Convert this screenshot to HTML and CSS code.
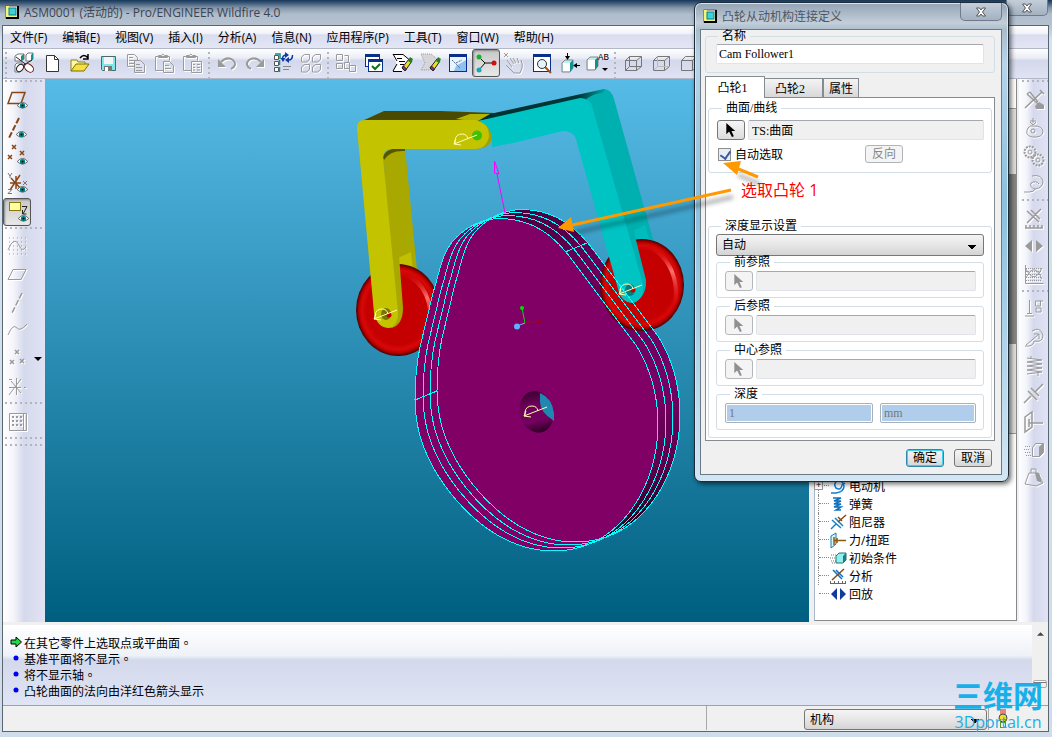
FILE: index.html
```
<!DOCTYPE html>
<html lang="zh-CN">
<head>
    <meta charset="UTF-8">
    <meta name="viewport" content="width=device-width, initial-scale=1.0">
    <title>ASM0001 (活动的) - Pro/ENGINEER Wildfire 4.0</title>
    <link rel="stylesheet" href="styles.css">
</head>
<body>
    <!-- Shared icon parts -->
    <svg class="defs" width="0" height="0">
        <symbol id="i-eye" viewBox="0 0 12 8">
            <path d="M0 4 Q6 -3 12 4 Q6 10 0 4z" fill="#fff" stroke="#555" stroke-width="1"/>
            <circle cx="6" cy="4" r="3" fill="#007c7c"/><circle cx="6" cy="4" r="1" fill="#000"/>
        </symbol>
        <symbol id="i-pointer" viewBox="0 0 12 16">
            <path d="M1 0 V12 L4 9 L7 15 L9 14 L6.500 8.500 H10.500z" fill="currentColor"/>
        </symbol>
        <symbol id="i-part" viewBox="0 0 14 14">
            <rect x="1" y="1" width="12" height="12" fill="#fff" stroke="#555"/>
            <path d="M1 1 h3 v9 h-1 l-2 3z" fill="#f4f480"/><path d="M1 13 l3-3 h7 l2 3z" fill="#f4f480"/>
            <rect x="4" y="3" width="7" height="7" fill="#3fd0d8" stroke="#078080"/>
            <path d="M13 1 V13 H1" fill="none" stroke="#000" stroke-width="2"/>
        </symbol>
        <symbol id="i-box" viewBox="0 0 24 24">
            <path d="M4.500 9.500 h11 v10 H4.500z M8.500 5.500 h12 v10 l-5 4 M4.500 9.500 l4-4 M15.500 9.500 l5-4" fill="none" stroke="#777"/>
        </symbol>
        <symbol id="i-x" viewBox="0 0 12 12">
            <path d="M1.500 2 h3 l1.500 2 l1.500-2 h3 l-3 4 l3 4 h-3 l-1.500-2 l-1.500 2 h-3 l3-4z" fill="#fff" stroke="#555"/>
        </symbol>
        <symbol id="i-pencil" viewBox="0 0 24 24">
            <path d="M12 17 L19 8 l3 2 l-7 10z" fill="#e8e020" stroke="#222"/>
            <path d="M12 17 l3 3 l1.500-2 l-3-3z" fill="#a020a0" stroke="#222"/>
            <path d="M18 10 l3 2 l2-4 l-3-2z" fill="#208030"/>
        </symbol>
        <symbol id="i-axis" viewBox="0 0 30 16">
            <path d="M5 13 V9 Q6 3 12 3 Q17 3 18 8 M27 4 L4 13 M4 13 L6 8 M4 13 L11 14" fill="none" stroke="#ffffb0"/>
        </symbol>
    </svg>

    <div class="app">
        <!-- Title bar -->
        <header class="titlebar">
            <svg class="title-icon"><use href="#i-part"/></svg>
            <h1>ASM0001 (活动的) - Pro/ENGINEER Wildfire 4.0</h1>
            <button class="win-close" aria-label="关闭"><svg><use href="#i-x"/></svg></button>
        </header>

        <div class="client">
            <nav class="menubar">
                <a href="#">文件(F)</a>
                <a href="#">编辑(E)</a>
                <a href="#">视图(V)</a>
                <a href="#">插入(I)</a>
                <a href="#">分析(A)</a>
                <a href="#">信息(N)</a>
                <a href="#">应用程序(P)</a>
                <a href="#">工具(T)</a>
                <a href="#">窗口(W)</a>
                <a href="#">帮助(H)</a>
            </nav>

            <!-- Main toolbar -->
            <div class="toolbar">
                <span class="grip"></span>
                <button class="tool" aria-label="连接"><svg viewBox="0 0 24 24">
                    <path d="M3 5 l3-2 h6 v5 l-3 2 H3z M14 4 l2-2 h5 v6 l-2 2 h-5z M3 14 l2-2 h5 v6 l-2 3 H3z" fill="#fff" stroke="#777"/>
                    <path d="M9 5 l3-2 v5 l-3 2z M19 4 l2-2 v6 l-2 2z" fill="#109090"/>
                    <path d="M4 6 L16 15 M20 9 L10 15" stroke="#222"/>
                    <ellipse cx="17" cy="17" rx="5" ry="3.500" transform="rotate(40 17 17)" fill="#fff" stroke="#611"/>
                    <ellipse cx="8" cy="17" rx="4" ry="3" transform="rotate(-50 8 17)" fill="#fff" stroke="#222"/></svg></button>
                <button class="tool" aria-label="新建"><svg viewBox="0 0 24 24">
                    <path d="M6.500 4.500 h8 l4 4 v12 h-12z" fill="#fff" stroke="#333"/><path d="M14.500 4.500 v4 h4" fill="none" stroke="#333"/></svg></button>
                <button class="tool" aria-label="打开"><svg viewBox="0 0 24 24">
                    <path d="M3 20 V9 h6 l1 2 h7 v3" fill="#fff8a0" stroke="#8a8020"/>
                    <path d="M3 20 L8 13 h13 l-5 7z" fill="#f5e040" stroke="#7a7010"/>
                    <path d="M12 7 q4-5 8 0 M20 3 v5 h-5" fill="none" stroke="#000" stroke-width="1.500"/></svg></button>
                <button class="tool" aria-label="保存"><svg viewBox="0 0 24 24">
                    <path d="M5.500 5.500 h14 v14 h-13 l-1-1z" fill="#7fe6ea" stroke="#4a6a6a"/>
                    <rect x="8" y="6" width="9" height="7" fill="#f4f4f4"/><rect x="8" y="15" width="8" height="5" fill="#777"/><rect x="9" y="16" width="3" height="4" fill="#fff"/></svg></button>
                <button class="tool off" aria-label="复制"><svg viewBox="0 0 24 24">
                    <path d="M3.500 3.500 h7 l3 3 v9 h-10z M5 6.500 h4 M5 9.500 h6 M5 12.500 h6"/>
                    <path d="M10.500 9.500 h6 l4 4 v8 h-10z M12 13.500 h4 M12 16.500 h6 M12 19.500 h6" fill="#dde1f0"/></svg></button>
                <button class="tool off" aria-label="粘贴"><svg viewBox="0 0 24 24">
                    <path d="M11 19.500 H3.500 V5.500 h14 v4 M6.500 6.500 V4.500 h3 q1-3 3 0 h3 v2z M11.500 10.500 h6 l4 4 v7 h-10z M13 14.500 h4 M13 17.500 h6"/></svg></button>
                <button class="tool off" aria-label="选择性粘贴"><svg viewBox="0 0 24 24">
                    <path d="M11 19.500 H3.500 V5.500 h14 v4 M6.500 6.500 V4.500 h3 q1-3 3 0 h3 v2z M11.500 10.500 h10 v11 h-10z M13 13.500 h2 M17 13.500 h3 M13 16.500 h2 M17 16.500 h3 M13 19 h2 M17 19 h3"/></svg></button>
                <span class="grip"></span>
                <button class="tool off" aria-label="撤消"><svg viewBox="0 0 24 24">
                    <path d="M6 11 Q12 5 18 9 Q23 14 16 18" stroke-width="2"/><path class="fill" d="M3 8 v8 h8z"/></svg></button>
                <button class="tool off" aria-label="重做"><svg viewBox="0 0 24 24">
                    <path d="M18 11 Q12 5 6 9 Q1 14 8 18" stroke-width="2"/><path class="fill" d="M21 8 v8 h-8z"/></svg></button>
                <button class="tool" aria-label="再生"><svg viewBox="0 0 24 24">
                    <path d="M3.500 4.500 h4 v4 h-4z M3.500 10.500 h4 v4 h-4z M3.500 16.500 h4 v4 h-4z" fill="#fff" stroke="#555"/>
                    <path d="M4 3 h5 v5 M8.500 9 v5 M8.500 16 v5" stroke="#109090" fill="none" stroke-width="1.500"/>
                    <path d="M11.500 8 q0-4 4-4 M21.500 4 q0 5-4 5" fill="none" stroke="#1238a8" stroke-width="1.500"/><path d="M14 1 l4 3 l-4 3z M18 6 l-4 3 l4 3z M9.500 7 h5 l-2.500 4z" fill="#1238a8"/>
                    <path d="M12 15.500 h8 M12 18.500 h6" stroke="#888"/></svg></button>
                <button class="tool off" aria-label="管理器"><svg viewBox="0 0 24 24">
                    <path d="M2.500 6 l3-2.500 h5 v5 l-3 2.500 h-5z M13.500 6 l3-2.500 h5 v5 l-3 2.500 h-5z M2.500 16 l3-2.500 h5 v5 l-3 2.500 h-5z M13.500 16 l3-2.500 h5 v5 l-3 2.500 h-5z"/></svg></button>
                <span class="grip"></span>
                <button class="tool off" aria-label="查找"><svg viewBox="0 0 24 24">
                    <path d="M2.500 3.500 h6 v6 h-6z M10.500 4.500 h4 v7 M2.500 12.500 h6 v5 h-6z M10.500 11.500 h5 v6 h-5z M15.500 14.500 h6 v6 h-6z"/></svg></button>
                <button class="tool" aria-label="选项"><svg viewBox="0 0 24 24">
                    <rect x="3.500" y="3.500" width="14" height="12" fill="#fff" stroke="#08308a"/><path d="M3 4.500 h15" stroke="#08308a" stroke-width="3"/>
                    <rect x="6.500" y="8.500" width="14" height="12" fill="#fff" stroke="#08308a"/><path d="M6 9.500 h15" stroke="#08308a" stroke-width="3"/>
                    <path d="M10 15 l3 3 l5-5" fill="none" stroke="#107010" stroke-width="2"/></svg></button>
                <button class="tool" aria-label="编辑"><svg viewBox="0 0 24 24">
                    <path d="M3 3 h10 l6 5 l-7 7 v6 H3 l4-7z" fill="#fff"/><path d="M3 3.500 h10 l6 5 M3 3 l4 7 M12 20.500 H3 M3 20 l4-7 M7 7.500 h5 M9 10.500 h6 M10 13.500 h4" fill="none" stroke="#000"/><use href="#i-pencil"/></svg></button>
                <button class="tool" aria-label="清除"><svg viewBox="0 0 24 24">
                    <path d="M3 3 h10 l6 5 l-7 11 H3 l4-7z" fill="#d6d6da" stroke="#999" stroke-dasharray="1 1"/><use href="#i-pencil"/></svg></button>
                <button class="tool" aria-label="重画"><svg viewBox="0 0 24 24">
                    <rect x="3.500" y="3.500" width="17" height="17" fill="#e8f4ff" stroke="#08308a"/><path d="M3 4.500 h18" stroke="#08308a" stroke-width="3"/>
                    <path d="M20 9 L10 15 L8 20 H20z" fill="#8fc0f0"/><path d="M6 9 l8 8 M10 12 l6-3" stroke="#468" stroke-dasharray="2 1"/></svg></button>
                <button class="tool pressed" aria-label="旋转中心"><svg viewBox="0 0 24 24">
                    <path d="M5 6 L11 12 H20 M11 12 L5 19" fill="none" stroke="#111"/>
                    <circle cx="5" cy="6" r="2.500" fill="#18b030"/><circle cx="20" cy="12" r="2.500" fill="#d01010"/><circle cx="5" cy="19" r="2.500" fill="#18a8b0"/></svg></button>
                <button class="tool off" aria-label="拖动"><svg viewBox="0 0 24 24">
                    <path d="M2 2 l4 4 M6 2 l-4 4 M5 9 l5 7 M8 7 l4 6 M11 7 l3 5 M15 7 l2 5 M19 9 q2 4 1 8 l-2 5 h-6 l-8-8"/></svg></button>
                <button class="tool" aria-label="缩放"><svg viewBox="0 0 24 24">
                    <rect x="3.500" y="3.500" width="17" height="17" fill="#fff" stroke="#08308a"/><path d="M3 4.500 h18" stroke="#08308a" stroke-width="3"/>
                    <path d="M15 16 l6 6" stroke="#a05010" stroke-width="2"/><circle cx="12" cy="13" r="4.500" fill="#e4f4f8" stroke="#333"/></svg></button>
                <button class="tool" aria-label="重定向"><svg viewBox="0 0 24 24">
                    <path d="M4 12 l3-3 h8 v8 l-3 4 H4z" fill="#b8f0f0" stroke="#888"/><path d="M12 12 l3-3 v8 l-3 4z" fill="#109090"/><rect x="5" y="12" width="7" height="8" fill="#fff"/>
                    <path d="M9.500 2 v5 M22 14.500 h-5" stroke="#000"/><path d="M7 5 h5 l-2.500 4z M19 12 v5 l-4-2.500z" fill="#000"/></svg></button>
                <button class="tool" aria-label="保存的视图"><svg viewBox="0 0 24 24">
                    <path d="M1 9 l3-3 h8 v9 l-3 4 H1z" fill="#b8f0f0" stroke="#888"/><path d="M9 9 l3-3 v9 l-3 4z" fill="#109090"/><rect x="2" y="9" width="7" height="9" fill="#fff"/>
                    <text class="ab" x="12" y="9">AB</text><path d="M16 17 h6 l-3 3z" fill="#000"/></svg></button>
                <span class="grip"></span>
                <button class="tool" aria-label="线框"><svg viewBox="0 0 24 24"><use href="#i-box"/><path d="M8.500 5.500 v10 h12 M4.500 19.500 l4-4" fill="none" stroke="#777"/></svg></button>
                <button class="tool" aria-label="隐藏线"><svg viewBox="0 0 24 24"><use href="#i-box"/><path d="M8.500 5.500 v10 h12 M4.500 19.500 l4-4" fill="none" stroke="#bbb"/></svg></button>
                <button class="tool" aria-label="无隐藏线"><svg viewBox="0 0 24 24"><use href="#i-box"/></svg></button>
            </div>

            <div class="work">
                <!-- Datum toolbar -->
                <div class="sidebar">
                    <span class="grip-h"></span>
                    <button class="tool" aria-label="基准平面显示"><svg viewBox="0 0 24 24"><path d="M7 4.500 h13 l-4 11 H3z" fill="none" stroke="#8b4513" stroke-width="1.500"/><use href="#i-eye" x="12" y="14" width="11" height="7"/></svg></button>
                    <button class="tool" aria-label="基准轴显示"><svg viewBox="0 0 24 24"><path d="M14 2 L4 22" fill="none" stroke="#8b4513" stroke-width="2" stroke-dasharray="6 2"/><use href="#i-eye" x="11" y="15" width="11" height="7"/></svg></button>
                    <button class="tool" aria-label="基准点显示"><svg viewBox="0 0 24 24"><path d="M7 1 l4 4 M11 1 l-4 4 M3 11 l4 4 M7 11 l-4 4 M15 7 l4 4 M19 7 l-4 4" stroke="#8b4513" stroke-width="1.500"/><use href="#i-eye" x="12" y="14" width="11" height="7"/></svg></button>
                    <button class="tool" aria-label="坐标系显示"><svg viewBox="0 0 24 24"><path d="M11 4 v13 M5 11 h11 M6 6 l9 10 M15 3 L5 18" stroke="#8b4513" stroke-width="1.500"/><path d="M3 1 l2 3 l2-3 M5 4 v2 M3 17.500 h4 l-4 4 h4 M18 9 l4 4 M22 9 l-4 4" fill="none" stroke="#777"/><use href="#i-eye" x="12" y="14" width="11" height="7"/></svg></button>
                    <button class="tool pressed" aria-label="注释显示"><svg viewBox="0 0 24 24"><rect x="4.500" y="2.500" width="11" height="8" fill="#ffffa0" stroke="#8a7a10"/><path d="M17 6.500 h5 L18 14 M17.500 10 v4 h4" fill="none" stroke="#222"/><use href="#i-eye" x="13" y="15" width="11" height="7"/></svg></button>
                    <span class="grip-h"></span>
                    <button class="tool off" aria-label="草绘"><svg viewBox="0 0 24 24"><path d="M4 3 h18 M4 7 h18 M4 11 h18 M4 15 h18 M4 19 h18" stroke-dasharray="1 3"/><path d="M3 15 Q9 0 14 10 Q17 18 21 12"/></svg></button>
                    <button class="tool off" aria-label="平面"><svg viewBox="0 0 24 24"><path d="M8 6.500 h13 l-5 10 H3z"/></svg></button>
                    <button class="tool off" aria-label="轴"><svg viewBox="0 0 24 24"><path d="M17 2 L7 22" stroke-dasharray="6 2" stroke-width="1.500"/></svg></button>
                    <button class="tool off" aria-label="曲线"><svg viewBox="0 0 24 24"><path d="M3 16 Q8 4 12 9 Q15 13 22 5"/></svg></button>
                    <div class="split">
                        <button class="tool off" aria-label="点"><svg viewBox="0 0 24 24"><path d="M10 3 l4 4 M14 3 l-4 4 M5 13 l4 4 M9 13 l-4 4 M15 12 l4 4 M19 12 l-4 4" stroke-width="1.500"/></svg></button>
                        <svg class="drop" viewBox="0 0 8 4"><path d="M0 0 h8 l-4 4z"/></svg>
                    </div>
                    <button class="tool off" aria-label="坐标系"><svg viewBox="0 0 24 24"><path d="M11.500 3 v17 M4 12.500 h12 M6 6 l10 12 M16 4 L4 20 M4 4.500 h3 M19 12.500 h2"/></svg></button>
                    <span class="grip-h"></span>
                    <button class="tool off" aria-label="网格"><svg viewBox="0 0 24 24"><path d="M4.500 3.500 h17 v17 h-17z M18.500 3 v17"/><path d="M7 7 h10 M7 11 h10 M7 15 h10" stroke-width="2" stroke-dasharray="2 2"/></svg></button>
                    <span class="grip-h"></span>
                    <span class="grip-h"></span>
                </div>

                <!-- Model view -->
                <main class="view">
                    <svg class="scene" viewBox="45 79 764 543" preserveAspectRatio="xMinYMin slice">
                        <defs>
                            <radialGradient id="wheel">
                                <stop offset="0.750" stop-color="#c40000"/><stop offset="0.860" stop-color="#d80808"/>
                                <stop offset="0.920" stop-color="#c00000"/><stop offset="1" stop-color="#4a0000"/>
                            </radialGradient>
                            <linearGradient id="shine" x1="0" y1="0" x2="0" y2="1">
                                <stop offset="0" stop-color="#e01010" stop-opacity="0"/><stop offset="0.400" stop-color="#ff7070"/>
                                <stop offset="1" stop-color="#e01010" stop-opacity="0"/>
                            </linearGradient>
                            <linearGradient id="side" x1="0" y1="0" x2="0" y2="1">
                                <stop offset="0" stop-color="#4c0040"/><stop offset="0.150" stop-color="#680056"/>
                                <stop offset="0.500" stop-color="#780064"/><stop offset="0.750" stop-color="#5c004c"/><stop offset="1" stop-color="#180014"/>
                            </linearGradient>
                            <linearGradient id="bore" x1="0" y1="0" x2="0" y2="1">
                                <stop offset="0" stop-color="#3c0032"/><stop offset="0.300" stop-color="#6c0058"/><stop offset="0.700" stop-color="#740060"/><stop offset="1" stop-color="#2c0024"/>
                            </linearGradient>
                            <linearGradient id="armtop" x1="0" y1="0" x2="1" y2="0">
                                <stop offset="0" stop-color="#003030"/><stop offset="0.800" stop-color="#003838"/><stop offset="1" stop-color="#00a0a0"/>
                            </linearGradient>
                            <path id="cam" d="M500 218.500 C525 219 546 228 566 252 L636 345 C650 367 658 396 658 423 C658 470 638 514 603 537 C590 545 575 551 553 551 C513 551 478 527 452 495 C430 468 415 435 415 400 C415 385 416 366 420 347 L433 293 C440 270 442 255 452 242 C465 227 482 219 500 218.500z"/>
                        </defs>

                        <!-- Left arm and roller -->
                        <path d="M362 121 L384 111 L440 111 L495 113 L480 122z" fill="#4a4a00"/>
                        <path d="M456 119 L470 114 L493 114 L480 122z" fill="#b4b400"/>
                        <path d="M383 155 L392 147 H405 L417 270 L400 300z" fill="#a8a800"/>
                        <path d="M383 157 Q386 147 405 148 V151 Q390 150 384 160z" fill="#565600"/>
                        <path d="M398 258 L411 252 L413 270 H399z" fill="#c0c000"/>
                        <ellipse cx="398" cy="310" rx="42" ry="46" fill="url(#wheel)"/>
                        <path d="M402 273 Q436 285 430 335" fill="none" stroke="url(#shine)" stroke-width="4"/>
                        <path d="M477 120 Q493 124 493 136 Q491 148 477 149z" fill="#a0a000"/>
                        <path d="M357 128 Q357 120 364 120 H474 Q489 121 489 136 Q487 149 474 149 H392 Q383 149 383 158 L399 285 L400 316 Q399 328 388 328 Q377 327 374 313z" fill="#c3c300"/>
                        <path d="M383 158 L399 255 L403 308 Q403 325 391 328 Q399 322 398 312z" fill="#a8a800"/>
                        <circle cx="477" cy="135.500" r="5" fill="#40c000"/>
                        <ellipse cx="386" cy="314" rx="5" ry="6" fill="#777700"/><circle cx="389" cy="315" r="2.500" fill="#c40000"/>
                        <use href="#i-axis" x="450" y="131" width="30" height="16"/>
                        <use href="#i-axis" x="370" y="306" width="30" height="16"/>

                        <!-- Cam body -->
                        <g fill="url(#side)">
                            <use href="#cam" x="22" y="-9"/><use href="#cam" x="18" y="-7"/><use href="#cam" x="14" y="-6"/>
                            <use href="#cam" x="10" y="-4"/><use href="#cam" x="6" y="-2"/><use href="#cam" x="3" y="-1"/>
                        </g>
                        <use href="#cam" fill="#800066"/>
                        <ellipse cx="536.500" cy="412" rx="17" ry="21" transform="rotate(-15 536 412)" fill="url(#bore)"/>
                        <path d="M540 393 Q552 398 554 413 V421 Q540 412 540 402z" fill="#2088b0"/>
                        <use href="#i-axis" x="520" y="403" width="30" height="16"/>

                        <!-- Right arm and roller -->
                        <path d="M583 97 L604 89 Q611 89 614 99 L654 243 L640 262 L590 110z" fill="#00b0b0"/>
                        <path d="M633 231 L645 225 L650 242 H634z" fill="#00bcbc"/>
                        <ellipse cx="642" cy="285" rx="42" ry="46" fill="url(#wheel)"/>
                        <path d="M650 247 Q681 265 675 307" fill="none" stroke="url(#shine)" stroke-width="4"/>
                        <path d="M490 114 L604 89 Q608 90 588 104 L478 121z" fill="url(#armtop)"/>
                        <path d="M586 99 Q600 90 610 94 L635 236 L646 280 Q647 296 634 303 L592 110z" fill="#00b0b0"/>
                        <path d="M478 121 L580 98 Q589 98 592 106 L643 284 Q644 301 632 303 Q621 302 618 289 L576 139 Q573 131 563 131 L513 143 L492 147 Q494 126 478 121z" fill="#00c3c3"/>
                        <ellipse cx="630" cy="290" rx="5" ry="6" fill="#008080"/><circle cx="633" cy="290" r="2.500" fill="#c40000"/>
                        <use href="#i-axis" x="615" y="281" width="30" height="16"/>

                        <!-- Cam edges -->
                        <g fill="none" stroke="#00ffff" shape-rendering="crispEdges">
                            <use href="#cam"/><use href="#cam" x="8" y="-3"/><use href="#cam" x="15" y="-6"/><use href="#cam" x="22" y="-9"/>
                            <path d="M565 252 L587 243 M415 400 L437 391"/>
                        </g>

                        <!-- Normal direction and spin centre -->
                        <path d="M505 213 L497 174 M494.500 161 V173 L499 174z" fill="none" stroke="#ff00ff"/>
                        <path d="M525 323 L522 308" stroke="#10d010"/><path d="M525 323 L539 321" stroke="#a00030"/><path d="M525 323 L517 326" stroke="#70b0ff"/>
                        <circle cx="522" cy="308" r="2" fill="#00e000"/><circle cx="539" cy="321.500" r="2.500" fill="#98002c"/><circle cx="517" cy="326.500" r="3" fill="#60b0ff"/>
                    </svg>
                </main>

                <!-- Model tree -->
                <aside class="tree-pane">
                    <div class="tree-upper"><span></span></div>
                    <ul class="tree">
                        <li class="expand"><svg viewBox="0 0 18 18"><path d="M2 16 h5 q8-1 8-7 q-1-6-7-5 q-4 3-1 7 q5 3 6-3 l3-2" fill="none" stroke="#1080d8" stroke-width="1.500"/></svg>电动机</li>
                        <li><svg viewBox="0 0 18 18"><path d="M4 3 h8 M12 3 L5 6 h7 L5 9 h7 L5 12 h7 L7 15 h5" fill="none" stroke="#1070c0" stroke-width="1.500"/></svg>弹簧</li>
                        <li><svg viewBox="0 0 18 18"><path d="M2 16 L7 11 M3 7 l9 8 M6 5 l8 8" fill="none" stroke="#1880c8" stroke-width="1.500"/><path d="M9 9 L17 2 M9 4 l4 4" stroke="#8a4a10" stroke-width="1.500"/></svg>阻尼器</li>
                        <li><svg viewBox="0 0 18 18"><path d="M2 5 l5-3 v11 l-5 4z" fill="#d8f8ff" stroke="#1878b8"/><path d="M5 6 v8 M5 9.500 h12 M8 7 v5" stroke="#8a5a10" stroke-width="1.500"/></svg>力/扭距</li>
                        <li><svg viewBox="0 0 18 18"><path d="M2 6 h5 M1 9 h5 M2 12 h5 M3 14 h4" stroke="#777" stroke-dasharray="1 1"/><path d="M7 7 l3-3 h7 v7 l-3 3 H7z" fill="#90f0f0" stroke="#287070"/><path d="M14 7 l3-3 v7 l-3 3z" fill="#188080"/></svg>初始条件</li>
                        <li><svg viewBox="0 0 18 18"><path d="M4 3 l9 9 M7 3 l7 7" stroke="#1070c8" stroke-width="1.500"/><path d="M3 13 L15 2" stroke="#8a4a10" stroke-width="1.500"/><path d="M1 16.500 h16 M1.500 14 v2 M5.500 14 v2 M9.500 14 v2 M13.500 14 v2 M16.500 14 v2" stroke="#666"/></svg>分析</li>
                        <li><svg viewBox="0 0 18 18"><path d="M8 3 v12 L2 9z M11 3 v12 L17 9z" fill="#103a9c"/></svg>回放</li>
                    </ul>
                </aside>

                <!-- Mechanism toolbar -->
                <div class="sidebar mech">
                    <span class="grip-h"></span>
                    <button class="tool off" aria-label="机构显示"><svg viewBox="0 0 24 24"><path d="M3 20 L20 4 M5 6 l11 10 M8 4 l8 10 M5 6 l3-2 M18 2 l4 4" stroke-width="1.500"/><path class="fill" d="M13 18 l4-4 l5 3 v4 h-8z"/></svg></button>
                    <button class="tool off" aria-label="凸轮"><svg viewBox="0 0 24 24"><path d="M11 2 v5 M8 5 h6 M11 9 l-3-3 M11 9 l3-3 M6 12 Q2 19 10 21 Q21 22 21 15 Q20 10 12 10 Q8 9 6 12z"/><circle cx="11" cy="15" r="2"/></svg></button>
                    <button class="tool off" aria-label="齿轮"><svg viewBox="0 0 24 24"><circle cx="8" cy="8" r="5.500" stroke-width="2" stroke-dasharray="2 1"/><circle cx="8" cy="8" r="2"/><circle cx="16" cy="16" r="5.500" stroke-width="2" stroke-dasharray="2 1"/><circle cx="16" cy="16" r="2"/></svg></button>
                    <button class="tool off" aria-label="伺服电动机"><svg viewBox="0 0 24 24"><path d="M2 20 h5 Q12 20 13 17 Q21 16 21 9 Q19 2 10 4 M13 17 Q7 15 9 11 Q14 8 17 12"/></svg></button>
                    <span class="grip-h"></span>
                    <button class="tool off" aria-label="机构分析"><svg viewBox="0 0 24 24"><path d="M5 16 L19 2 M5 4 l12 11 M9 3 l9 9 M3 21 h18 M4 18 v3 M8 18 v3 M12 18 v3 M16 18 v3 M20 18 v3" stroke-width="1.500"/></svg></button>
                    <button class="tool off" aria-label="回放"><svg viewBox="0 0 24 24"><path class="fill" d="M10 5 v12 L3 11z M14 5 v12 l7-6z"/></svg></button>
                    <button class="tool off" aria-label="测量"><svg viewBox="0 0 24 24"><path d="M3.500 2 v18.500 h18"/><path d="M4 5.500 h16 M4 8.500 h16 M4 11.500 h16 M4 14.500 h16 M4 17.500 h16" stroke-dasharray="1 1"/><path d="M4 15 Q12 -2 20 16 M4 6 Q12 22 20 5"/></svg></button>
                    <span class="grip-h"></span>
                    <button class="tool off" aria-label="重力"><svg viewBox="0 0 24 24"><path d="M7.500 2 v14 M3 18 h9 M5 15.500 h5 M14.500 3 h4 v5 h-5 V3z M18 3 h3 M14 10 h5 v4 h-5z"/></svg></button>
                    <button class="tool off" aria-label="执行电动机"><svg viewBox="0 0 24 24"><path d="M3 20 h4 Q12 19 12 15 Q21 17 21 9 Q18 0 10 5 M4 19 L17 8 M12 8 h5 v5"/></svg></button>
                    <button class="tool off" aria-label="弹簧"><svg viewBox="0 0 24 24"><path d="M5 4 L20 6 L5 8 L20 10 L5 12 L20 14 L5 16 L20 18 L5 20 M9 2 v3 M16 19 v3"/></svg></button>
                    <button class="tool off" aria-label="阻尼器"><svg viewBox="0 0 24 24"><path d="M2 21 L9 14 M6 9 l9 9 M9 6 l8 8 M13 10 L21 2" stroke-width="1.500"/></svg></button>
                    <button class="tool off" aria-label="力/扭矩"><svg viewBox="0 0 24 24"><path d="M3 7 l7-5 v15 l-7 5z M7 9 v8 M10 9 v7 M7 13 h14" stroke-width="1.500"/></svg></button>
                    <button class="tool off" aria-label="初始条件"><svg viewBox="0 0 24 24"><path d="M3 8.500 h6 M2 11.500 h6 M3 14.500 h6 M4 17.500 h5" stroke-dasharray="1 1"/><path d="M10.500 9.500 l3-4 h8 v9 l-4 4 h-7z"/><path class="fill" d="M17 9 l4-4 v10 l-4 4z"/></svg></button>
                    <button class="tool off" aria-label="质量属性"><svg viewBox="0 0 24 24"><path d="M3 18 L7 7 h9 l5 10 l-7 3z M9 7 V3 h5 v4"/><path class="fill" d="M13 7 h4 l3 10 l-5-2z"/></svg></button>
                </div>
            </div>

            <!-- Message area -->
            <section class="messages" lang="zh-TW">
                <ul>
                    <li><svg viewBox="0 0 12 12"><path d="M1 4 h5 V1 l5.500 5 L6 11 V8 H1z" fill="#20d840" stroke="#000"/></svg>在其它零件上选取点或平曲面。</li>
                    <li><svg viewBox="0 0 12 12"><circle cx="6" cy="6" r="2.500" fill="#0000f0"/></svg>基准平面将不显示。</li>
                    <li><svg viewBox="0 0 12 12"><circle cx="6" cy="6" r="2.500" fill="#0000f0"/></svg>将不显示轴。</li>
                    <li><svg viewBox="0 0 12 12"><circle cx="6" cy="6" r="2.500" fill="#0000f0"/></svg>凸轮曲面的法向由洋红色箭头显示</li>
                </ul>
                <div class="scroll">
                    <svg viewBox="0 0 8 4"><path d="M0 4 h8 L4 0z" fill="#444"/></svg>
                    <span class="thumb"></span>
                </div>
            </section>

            <footer class="status">
                <span class="status-text"></span>
                <select class="filter" aria-label="过滤器"><option>机构</option></select>
                <span class="light"><svg viewBox="0 0 10 22"><rect x="2" y="2" width="6" height="5" fill="#f08080"/><rect x="2.500" y="15.500" width="5" height="5" fill="#fff" stroke="#5a9a20"/><circle cx="5" cy="11" r="4" fill="#f0e020" stroke="#444"/></svg></span>
            </footer>
        </div>
    </div>

    <!-- Cam follower dialog -->
    <form class="dialog">
        <header class="dialog-title">
            <svg class="title-icon"><use href="#i-part"/></svg>
            <h2>凸轮从动机构连接定义</h2>
            <button type="button" class="dialog-close" aria-label="关闭"><svg><use href="#i-x"/></svg></button>
        </header>
        <div class="dialog-body">
            <fieldset class="name-group">
                <legend>名称</legend>
                <input type="text" class="field" aria-label="名称" value="Cam Follower1">
            </fieldset>

            <div class="tabs">
                <button type="button" class="tab active">凸轮1</button>
                <button type="button" class="tab wide">凸轮2</button>
                <button type="button" class="tab">属性</button>
            </div>

            <div class="tab-panel">
                <fieldset class="surface">
                    <legend>曲面/曲线</legend>
                    <div class="row">
                        <button type="button" class="pick" aria-label="选取曲面"><svg><use href="#i-pointer"/></svg></button>
                        <input type="text" class="field readonly" aria-label="曲面/曲线" value="TS:曲面" readonly>
                    </div>
                    <div class="row options">
                        <label class="check"><input type="checkbox" checked>自动选取</label>
                        <button type="button" class="btn flip" disabled>反向</button>
                    </div>
                </fieldset>

                <fieldset class="depth">
                    <legend>深度显示设置</legend>
                    <select class="depth-mode" aria-label="深度显示设置"><option>自动</option></select>
                    <fieldset class="ref">
                        <legend>前参照</legend>
                        <div class="row">
                            <button type="button" class="pick" aria-label="选取前参照" disabled><svg><use href="#i-pointer"/></svg></button>
                            <input type="text" class="field" aria-label="前参照" disabled>
                        </div>
                    </fieldset>
                    <fieldset class="ref">
                        <legend>后参照</legend>
                        <div class="row">
                            <button type="button" class="pick" aria-label="选取后参照" disabled><svg><use href="#i-pointer"/></svg></button>
                            <input type="text" class="field" aria-label="后参照" disabled>
                        </div>
                    </fieldset>
                    <fieldset class="ref">
                        <legend>中心参照</legend>
                        <div class="row">
                            <button type="button" class="pick" aria-label="选取中心参照" disabled><svg><use href="#i-pointer"/></svg></button>
                            <input type="text" class="field" aria-label="中心参照" disabled>
                        </div>
                    </fieldset>
                    <fieldset class="ref">
                        <legend>深度</legend>
                        <div class="row values">
                            <input type="text" class="field value" aria-label="深度" value="1" disabled>
                            <input type="text" class="field value unit" aria-label="单位" value="mm" disabled>
                        </div>
                    </fieldset>
                </fieldset>
            </div>

            <div class="actions">
                <button type="button" class="btn default">确定</button>
                <button type="button" class="btn">取消</button>
            </div>
        </div>
    </form>

    <!-- Callout -->
    <div class="callout">
        <svg viewBox="550 150 220 90">
            <g class="callout-shadow">
                <path d="M733 197 L573 233 M760 184 L738 175" fill="none" stroke="#000" stroke-width="4"/>
            </g>
            <path d="M731 190 L570 225.500 M758 177 L736 168" fill="none" stroke="#ff9900" stroke-width="3"/>
            <path d="M558 228 L571 217 L574 232z M723 163 L741 161 L737 175z" fill="#ff9900"/>
        </svg>
        <span>选取凸轮 1</span>
    </div>

    <!-- Site mark -->
    <div class="watermark">
        <strong>三维网</strong>
        <span>3Dportal.cn</span>
    </div>
</body>
</html>
```

FILE: styles.css
```
* {
    box-sizing: border-box;
}

body {
    margin: 0;
    font-family: "Open Sans", "Noto Sans CJK SC", sans-serif;
    font-size: 12px;
    color: #000;
    overflow: hidden;
}

button, input, select {
    font: inherit;
    color: inherit;
    margin: 0;
    padding: 0;
}

ul {
    list-style: none;
    margin: 0;
    padding: 0;
}

svg {
    display: block;
    flex: none;
}

.defs {
    position: absolute;
}

/* Main window */
.app {
    display: flex;
    flex-direction: column;
    height: 100vh;
    padding: 0 3px 5px 2px;
    background: linear-gradient(#17385a 0, #3c5878 3px, #8798ac 8px, #aebccb 14px, #b4c2d0 24px, #d5e2ef 40px, #cfdcea 100%);
}

.titlebar {
    display: flex;
    align-items: center;
    height: 25px;
    padding: 0 1px 2px 3px;
}

.title-icon {
    width: 14px;
    height: 14px;
}

.titlebar h1 {
    flex: 1;
    margin: 0 0 0 5px;
    font-size: 12px;
    font-weight: normal;
    color: #3c4450;
}

.win-close, .dialog-close {
    display: flex;
    align-items: center;
    justify-content: center;
    align-self: flex-start;
    width: 42px;
    height: 16px;
    border: 1px solid #6d7b8c;
    border-top: 0;
    border-radius: 0 0 5px 5px;
    background: linear-gradient(#c3ced9, #a3b1c0);
}

.win-close svg, .dialog-close svg {
    width: 12px;
    height: 12px;
}

.client {
    flex: 1;
    display: flex;
    flex-direction: column;
    min-height: 0;
    border: 1px solid #5c6670;
    background: #f0f0f0;
}

.menubar {
    display: flex;
    align-items: center;
    gap: 15px;
    height: 23px;
    padding-left: 7px;
    border-bottom: 1px solid #b4b8c6;
    background: linear-gradient(#ffffff, #f0f2f9 35%, #d9ddee 40%, #e2e6f5);
}

.menubar a {
    color: #000;
    text-decoration: none;
    white-space: nowrap;
}

.toolbar {
    display: flex;
    height: 30px;
    border-bottom: 1px solid #b4b8c6;
    background: linear-gradient(#ffffff, #eceef7 30%, #d3d8ea 40%, #dfe3f4);
    overflow: hidden;
}

.grip {
    flex: none;
    width: 7px;
    margin-top: 3px;
    background: linear-gradient(#b2b4be, #b2b4be) 2px 0 / 2px 100% no-repeat;
    mask: repeating-linear-gradient(#000 0, #000 2px, transparent 2px, transparent 5px);
}

.grip-h {
    flex: none;
    height: 7px;
    background: linear-gradient(#b2b4be, #b2b4be) 0 1px / 100% 2px no-repeat;
    mask: repeating-linear-gradient(90deg, transparent 0, transparent 2px, #000 2px, #000 4px, transparent 4px, transparent 5px);
}

.tool {
    flex: none;
    width: 28px;
    height: 28px;
    padding: 1px;
    border: 1px solid transparent;
    border-radius: 3px;
    background: none;
}

.tool svg {
    width: 24px;
    height: 24px;
}

.tool.pressed {
    border-color: #555;
    background: linear-gradient(#c8c8c8, #e8e8e8);
    box-shadow: inset 1px 1px 2px #888;
}

.tool.off svg {
    fill: none;
    stroke: #9a9a9a;
    filter: drop-shadow(1px 1px 0 #fff);
}

.tool .fill {
    fill: #9a9a9a;
    stroke: none;
}

.ab {
    font-family: "Liberation Mono", monospace;
    font-size: 9px;
}

.work {
    flex: 1;
    display: flex;
    min-height: 0;
}

.sidebar {
    flex: none;
    display: flex;
    flex-direction: column;
    width: 42px;
    background: linear-gradient(90deg, #ffffff, #f4f5fb 25%, #d5d9ec 50%, #dfe3f4);
}

.sidebar.mech {
    width: 29px;
    padding-left: 1px;
}

.split {
    display: flex;
    align-items: center;
}

.drop {
    width: 8px;
    height: 4px;
    margin-left: 3px;
}

.view {
    flex: 1;
    min-width: 0;
    background: linear-gradient(#56bbe7, #005f80);
}

.scene {
    width: 100%;
    height: 100%;
}

/* Model tree */
.tree-pane {
    flex: none;
    display: flex;
    flex-direction: column;
    justify-content: space-between;
    width: 203px;
    margin: 0 2px 1px 5px;
    padding-bottom: 17px;
    border: solid #8a8a8a;
    border-width: 0 1px 1px;
    border-left-color: #a8b8cc;
    background: #fff;
}

.tree-upper {
    height: 326px;
    margin-top: 29px;
    padding-top: 65px;
    border: solid #999;
    border-width: 1px 0;
    background: #dedede;
}

.tree-upper span {
    display: block;
    height: 170px;
    background: #858585;
}

.tree li {
    position: relative;
    display: flex;
    align-items: center;
    gap: 2px;
    height: 18px;
    margin-left: 3px;
    padding-left: 10px;
    border-left: 1px dotted #888;
}

.tree li:last-child {
    border-left-color: transparent;
}

.tree li::before {
    content: "";
    position: absolute;
    top: 8px;
    left: 0;
    width: 10px;
    border-top: 1px dotted #888;
}

.tree .expand::after {
    content: "+";
    position: absolute;
    top: 5px;
    left: -4px;
    width: 7px;
    height: 7px;
    outline: 1px solid #999;
    background: #fff;
    font-size: 9px;
    line-height: 6px;
    text-align: center;
}

.tree svg {
    width: 18px;
    height: 18px;
}

/* Messages and status */
.messages {
    display: flex;
    height: 80px;
    margin-top: 3px;
    background: linear-gradient(#ffffff, #eef2f8 38%, #d3d8eb 44%, #e0e5f5);
    font-family: "Noto Sans CJK TC", sans-serif;
}

.messages ul {
    flex: 1;
    padding: 9px 0 0 7px;
}

.messages li {
    display: flex;
    align-items: center;
    gap: 2px;
    height: 16px;
}

.messages li svg {
    width: 12px;
    height: 12px;
}

.scroll {
    display: flex;
    flex-direction: column;
    align-items: center;
    justify-content: space-between;
    width: 16px;
    padding: 7px 0 17px;
    background: #f0f0f0;
}

.scroll svg {
    width: 7px;
    height: 4px;
}

.scroll .thumb {
    width: 14px;
    height: 8px;
    border: 1px solid #aaa;
    border-radius: 2px;
    background: linear-gradient(#fff 20%, #777 20%, #777 35%, #eee 35%, #eee 60%, #777 60%, #777 75%, #eee 75%);
}

.status {
    display: flex;
    height: 26px;
    padding-bottom: 1px;
    border-top: 1px solid #a0a0a0;
}

.status-text {
    flex: 1;
    margin-right: 97px;
    border-right: 1px solid #a8a8a8;
}

.filter, .depth-mode {
    appearance: none;
    border: 1px solid #777;
    border-radius: 3px;
    background:
        linear-gradient(#000, #000) right 10px bottom 6px / 2px 1px no-repeat,
        linear-gradient(#000, #000) right 9px bottom 7px / 4px 1px no-repeat,
        linear-gradient(#000, #000) right 8px bottom 8px / 6px 1px no-repeat,
        linear-gradient(#000, #000) right 7px bottom 9px / 8px 1px no-repeat,
        linear-gradient(#f4f4f4, #e6e6e6 50%, #d4d4d4);
}

.filter {
    width: 183px;
    margin: 3px 1px 0 0;
    padding-left: 5px;
}

.light {
    display: flex;
    justify-content: center;
    width: 29px;
    margin: 1px 31px 0 0;
    border-left: 1px solid #a8a8a8;
}

.light svg {
    width: 10px;
    height: 22px;
}

/* Dialog */
.dialog {
    position: absolute;
    top: 2px;
    left: 694px;
    width: 315px;
    padding: 0 6px 6px 5px;
    border: 1px solid #1d2b38;
    border-radius: 7px;
    background: linear-gradient(#93a3b5, #c3ced9 20px, #a9bccc 27px, #b8d4e8 60px, #8cc0dc 200px, #d2e6f4);
    box-shadow: inset 0 0 0 1px #d8e8f2, 2px 2px 5px rgba(0, 0, 0, 0.6);
}

.dialog-title {
    display: flex;
    align-items: center;
    height: 26px;
    padding-left: 3px;
}

.dialog-title h2 {
    flex: 1;
    margin: 0 0 0 5px;
    font-size: 12px;
    font-weight: normal;
    color: #4a5866;
}

.dialog-close {
    height: 18px;
}

.dialog-body {
    padding: 0 6px 7px 4px;
    border: 1px solid #6b7a88;
    background: #f0f0f0;
    font-family: "Liberation Serif", "Noto Sans CJK SC", serif;
}

fieldset {
    min-width: 0;
    margin: 0;
    border: 1px solid #d2dde6;
    border-radius: 3px;
}

legend {
    height: 12px;
    padding: 0 4px;
    line-height: 12px;
}

.name-group {
    padding: 2px 10px 8px;
}

.name-group > legend {
    margin-left: 2px;
}

.name-group .field {
    display: block;
    width: 100%;
    padding: 0 2px;
}

.field {
    min-width: 0;
    height: 20px;
    padding: 0 3px;
    border: 1px solid #e0e4e8;
    border-top-color: #a4a8b0;
    border-radius: 2px;
    background: #fff;
}

.field.readonly, .field:disabled {
    background: #f0f0f0;
}

.tabs {
    display: flex;
    align-items: flex-end;
    height: 22px;
    margin-top: 3px;
}

.tab {
    height: 20px;
    padding: 0 5px;
    border: 1px solid #868b92;
    border-left-width: 0;
    background: linear-gradient(#f4f4f4, #d8d8d8);
}

.tab.wide {
    padding: 0 17px 0 10px;
    border-right-width: 2px;
}

.tab.active {
    position: relative;
    width: 60px;
    height: 22px;
    padding: 0 5px 2px 0;
    border-left-width: 1px;
    border-bottom: 0;
    background: #fff;
}

.tab-panel {
    margin-top: -1px;
    padding: 4px 2px 2px;
    border: 1px solid #868b92;
    background: #fff;
}

.surface {
    padding: 6px 7px 9px 8px;
}

.row {
    display: flex;
    gap: 3px;
}

.row .field {
    flex: 1;
}

.pick {
    display: flex;
    align-items: center;
    justify-content: center;
    width: 28px;
    height: 20px;
    border: 1px solid #777;
    border-radius: 3px;
    background: linear-gradient(#f5f5f5, #dcdcdc);
}

.pick svg {
    width: 12px;
    height: 15px;
}

.pick:disabled {
    border-color: #b4b8bc;
    background: #f4f4f4;
    color: #909090;
}

.options {
    align-items: center;
    justify-content: space-between;
    margin-top: 5px;
    padding-right: 81px;
}

.check {
    display: flex;
    align-items: center;
    gap: 4px;
}

.check input {
    appearance: none;
    width: 13px;
    height: 13px;
    margin-left: 1px;
    border: 1px solid #8e8f8f;
    background: #e8eef6;
    position: relative;
}

.check input:checked::after {
    content: "";
    position: absolute;
    top: 0;
    left: 3px;
    width: 5px;
    height: 8px;
    border: solid #3a5aa0;
    border-width: 0 2px 2px 0;
    transform: rotate(35deg);
}

.btn {
    width: 38px;
    height: 18px;
    border: 1px solid #777;
    border-radius: 3px;
    background: linear-gradient(#f5f5f5, #e8e8e8 50%, #d6d6d6);
    line-height: 16px;
}

.btn:disabled {
    border-color: #b0b4b8;
    background: #f4f4f4;
    color: #888;
}

.btn.default {
    border-color: #2c88b0;
    box-shadow: inset 0 0 0 1px #40d0f0;
}

.depth {
    margin-top: 47px;
    padding: 2px 7px 7px;
}

.depth-mode {
    display: block;
    width: 100%;
    height: 22px;
    padding: 0 5px;
}

.ref {
    margin-bottom: 2px;
    padding: 3px 7px 6px 8px;
}

.ref:last-child {
    margin-bottom: 0;
}

.surface > legend, .depth > legend, .ref > legend {
    margin-left: 5px;
}

.values {
    gap: 7px;
}

.row .value {
    border: 1px solid #a8b0b8;
    outline: 1px solid #fff;
    outline-offset: -2px;
    background: #b0ceec;
    color: #777;
}

.row .unit {
    flex: none;
    width: 96px;
}

.actions {
    display: flex;
    justify-content: flex-end;
    gap: 10px;
    margin-top: 8px;
    padding-right: 3px;
}

/* Callout over the dialog edge */
.callout {
    position: absolute;
    top: 150px;
    left: 550px;
    width: 280px;
    color: #ff0000;
    font-size: 16px;
    pointer-events: none;
}

.callout svg {
    width: 220px;
    height: 90px;
}

.callout-shadow {
    opacity: 0.3;
    filter: blur(2px);
}

.callout span {
    position: absolute;
    top: 29px;
    left: 191px;
    line-height: 22px;
}

.watermark {
    position: absolute;
    right: 9px;
    bottom: 5px;
    display: flex;
    flex-direction: column;
    align-items: center;
    color: #18b0e8;
    font-size: 16px;
    line-height: 20px;
}

.watermark strong {
    font-size: 30px;
    line-height: 32px;
}
```
